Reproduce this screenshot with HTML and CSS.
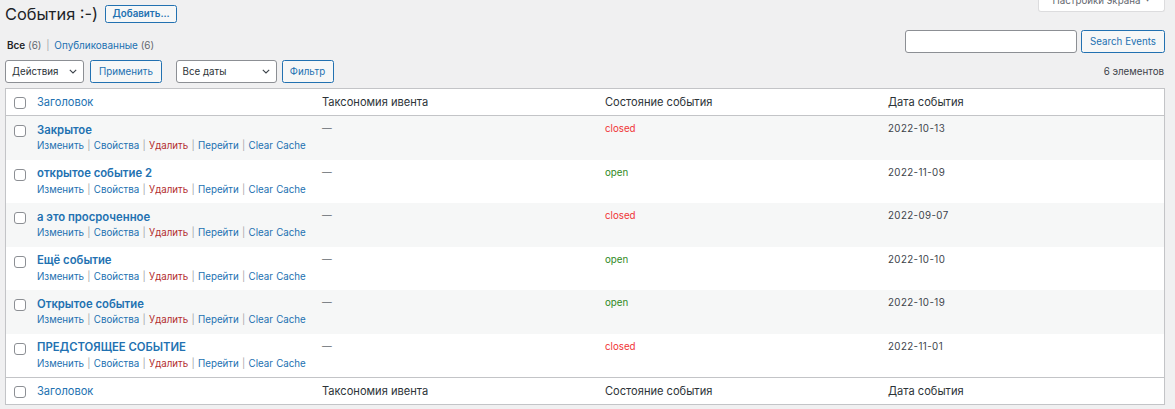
FILE: index.html
```html
<!DOCTYPE html>
<html lang="ru">
<head>
<meta charset="utf-8">
<title>События</title>
<link rel="stylesheet" href="styles.css">
</head>
<body>
<div class="wrap">
  <div class="top">
    <h1 class="page-title">События :-)</h1>
    <a class="btn add-btn">Добавить...</a>
    <div class="screen-opts">Настройки экрана <span class="caret">▼</span></div>
  </div>

  <div class="filters">
    <div class="subsub">
      <span class="current">Все</span> <span class="count">(6)</span> <span class="sep">|</span> <a>Опубликованные</a> <span class="count">(6)</span>
    </div>
    <div class="search">
      <span class="search-input"></span>
      <a class="btn search-btn">Search Events</a>
    </div>
  </div>

  <div class="tablenav">
    <div class="select sel-actions"><span>Действия</span><svg class="chev" width="8" height="5" viewBox="0 0 8 5"><polyline points="0.8,0.8 4,4 7.2,0.8"/></svg></div>
    <a class="btn btn-apply">Применить</a>
    <div class="select sel-dates"><span>Все даты</span><svg class="chev" width="8" height="5" viewBox="0 0 8 5"><polyline points="0.8,0.8 4,4 7.2,0.8"/></svg></div>
    <a class="btn btn-filter">Фильтр</a>
    <span class="num">6 элементов</span>
  </div>

  <table class="list">
    <colgroup>
      <col class="c-check"><col class="c-title"><col class="c-tax"><col class="c-state"><col class="c-date">
    </colgroup>
    <thead>
      <tr class="head">
        <th class="check"><span class="cb"></span></th>
        <th><a>Заголовок</a></th>
        <th>Таксономия ивента</th>
        <th>Состояние события</th>
        <th>Дата события</th>
      </tr>
    </thead>
    <tbody>
      <tr>
        <td class="check"><span class="cb"></span></td>
        <td><a class="row-title">Закрытое</a><div class="row-actions"><a>Изменить</a> | <a>Свойства</a> | <a class="del">Удалить</a> | <a>Перейти</a> | <a>Clear Cache</a></div></td>
        <td class="dash">—</td>
        <td class="closed">closed</td>
        <td class="date">2022-10-13</td>
      </tr>
      <tr>
        <td class="check"><span class="cb"></span></td>
        <td><a class="row-title">открытое событие 2</a><div class="row-actions"><a>Изменить</a> | <a>Свойства</a> | <a class="del">Удалить</a> | <a>Перейти</a> | <a>Clear Cache</a></div></td>
        <td class="dash">—</td>
        <td class="open">open</td>
        <td class="date">2022-11-09</td>
      </tr>
      <tr>
        <td class="check"><span class="cb"></span></td>
        <td><a class="row-title">а это просроченное</a><div class="row-actions"><a>Изменить</a> | <a>Свойства</a> | <a class="del">Удалить</a> | <a>Перейти</a> | <a>Clear Cache</a></div></td>
        <td class="dash">—</td>
        <td class="closed">closed</td>
        <td class="date">2022-09-07</td>
      </tr>
      <tr>
        <td class="check"><span class="cb"></span></td>
        <td><a class="row-title">Ещё событие</a><div class="row-actions"><a>Изменить</a> | <a>Свойства</a> | <a class="del">Удалить</a> | <a>Перейти</a> | <a>Clear Cache</a></div></td>
        <td class="dash">—</td>
        <td class="open">open</td>
        <td class="date">2022-10-10</td>
      </tr>
      <tr>
        <td class="check"><span class="cb"></span></td>
        <td><a class="row-title">Открытое событие</a><div class="row-actions"><a>Изменить</a> | <a>Свойства</a> | <a class="del">Удалить</a> | <a>Перейти</a> | <a>Clear Cache</a></div></td>
        <td class="dash">—</td>
        <td class="open">open</td>
        <td class="date">2022-10-19</td>
      </tr>
      <tr>
        <td class="check"><span class="cb"></span></td>
        <td><a class="row-title">ПРЕДСТОЯЩЕЕ СОБЫТИЕ</a><div class="row-actions"><a>Изменить</a> | <a>Свойства</a> | <a class="del">Удалить</a> | <a>Перейти</a> | <a>Clear Cache</a></div></td>
        <td class="dash">—</td>
        <td class="closed">closed</td>
        <td class="date">2022-11-01</td>
      </tr>
    </tbody>
    <tfoot>
      <tr class="foot">
        <th class="check"><span class="cb"></span></th>
        <th><a>Заголовок</a></th>
        <th>Таксономия ивента</th>
        <th>Состояние события</th>
        <th>Дата события</th>
      </tr>
    </tfoot>
  </table>
</div>
</body>
</html>
```

FILE: styles.css
```css
* { box-sizing: border-box; }
html, body { margin: 0; padding: 0; }
body {
  background: #f0f0f1;
  font-family: Inter, "Noto Sans", "Liberation Sans", sans-serif;
  font-size: 9.75px;
  line-height: 1.4;
  color: #3c434a;
  overflow: hidden;
}
a { color: #2271b1; text-decoration: none; }

.wrap { width: 1175px; padding: 0 10px 0 5px; }

/* top bar */
.top { display: flex; align-items: flex-start; height: 30px; }
.page-title {
  margin: 0;
  padding-top: 3px;
  font-size: 16.4px;
  line-height: 22px;
  font-weight: 400;
  color: #1d2327;
}
.btn {
  display: inline-flex;
  align-items: center;
  justify-content: center;
  height: 22.5px;
  padding: 0 7px;
  border: 1px solid #2271b1;
  border-radius: 2.5px;
  background: #f6f7f7;
  color: #2271b1;
  font-size: 9.75px;
  white-space: nowrap;
}
.add-btn {
  width: 72px;
  height: 18px;
  margin: 5px 0 0 7px;
  font-weight: 600;
}
.screen-opts {
  margin-left: auto;
  margin-top: -10px;
  width: 127px;
  height: 22px;
  display: flex;
  align-items: center;
  justify-content: center;
  gap: 4px;
  background: #fff;
  border: 1px solid #dcdcde;
  border-top: 0;
  border-radius: 0 0 3px 3px;
  color: #646970;
}
.caret { font-size: 6px; }

/* views + search */
.filters { display: flex; justify-content: space-between; align-items: flex-start; height: 23px; }
.subsub { padding: 8px 0 0 2px; line-height: 15px; color: #646970; font-size: 9.95px; }
.subsub .current { font-weight: 600; color: #1d2327; }
.subsub .sep { color: #a7aaad; padding: 0 2px; }
.search { display: flex; gap: 4px; }
.search-input {
  width: 172px;
  height: 23px;
  background: #fff;
  border: 1px solid #8c8f94;
  border-radius: 3px;
}
.search-btn { width: 84px; height: 23px; }

/* tablenav */
.tablenav { display: flex; align-items: center; height: 23px; margin-top: 7px; }
.select {
  height: 22.5px;
  display: flex;
  align-items: center;
  justify-content: space-between;
  padding: 0 6px 0 6px;
  background: #fff;
  border: 1px solid #8c8f94;
  border-radius: 3px;
  color: #2c3338;
}
.chev polyline { fill: none; stroke: #3c434a; stroke-width: 1.1; }
.sel-actions { width: 79px; }
.btn-apply { width: 72px; margin-left: 6px; }
.sel-dates { width: 101.5px; margin-left: 13.5px; }
.btn-filter { width: 52px; margin-left: 4.5px; }
.num { margin-left: auto; margin-right: 1px; color: #3c434a; }

/* table */
.list {
  margin-top: 5px;
  width: 1160px;
  table-layout: fixed;
  border-collapse: separate;
  border-spacing: 0;
  background: #fff;
  border: 1px solid #c3c4c7;
  box-shadow: 0 1px 1px rgba(0,0,0,0.04);
}
.c-check { width: 23px; }
.c-title { width: 285px; }
.c-tax { width: 283px; }
.c-state { width: 283px; }
.list th, .list td {
  text-align: left;
  font-weight: 400;
  padding: 6px 8px 0;
  vertical-align: top;
  line-height: 14.6px;
  white-space: nowrap;
}
.list td { color: #3c434a; }
.head, .foot { height: 27px; }
.head th, .foot th {
  vertical-align: middle;
  padding: 0 8px;
  color: #2c3338;
  font-size: 11.1px;
}
.head th { border-bottom: 1px solid #c3c4c7; }
.foot th { border-top: 1px solid #c3c4c7; }
.list tbody tr { height: 43.5px; }
.list tbody tr:nth-child(odd) { background: #f6f7f7; }

.list .check { padding: 9px 0 0 8px; }
.head .check, .foot .check { padding: 0 0 0 8px; }
.cb {
  display: block;
  width: 12px;
  height: 12px;
  background: #fff;
  border: 1px solid #8c8f94;
  border-radius: 3px;
}
.head .cb, .foot .cb { margin-top: 1px; }

.row-title {
  display: block;
  padding-top: 0.5px;
  font-size: 11.3px;
  font-weight: 600;
  line-height: 14.6px;
}
.row-actions {
  padding-top: 1px;
  line-height: 15px;
  color: #a7aaad;
  font-size: 9.75px;
  word-spacing: 0.5px;
}
.row-actions .del { color: #b32d2e; }
.list td.dash { color: #646970; }
.list td.closed { color: #f03535; }
.list td.open { color: #2f8a1e; }
.list td.date { letter-spacing: 0.4px; }
```
